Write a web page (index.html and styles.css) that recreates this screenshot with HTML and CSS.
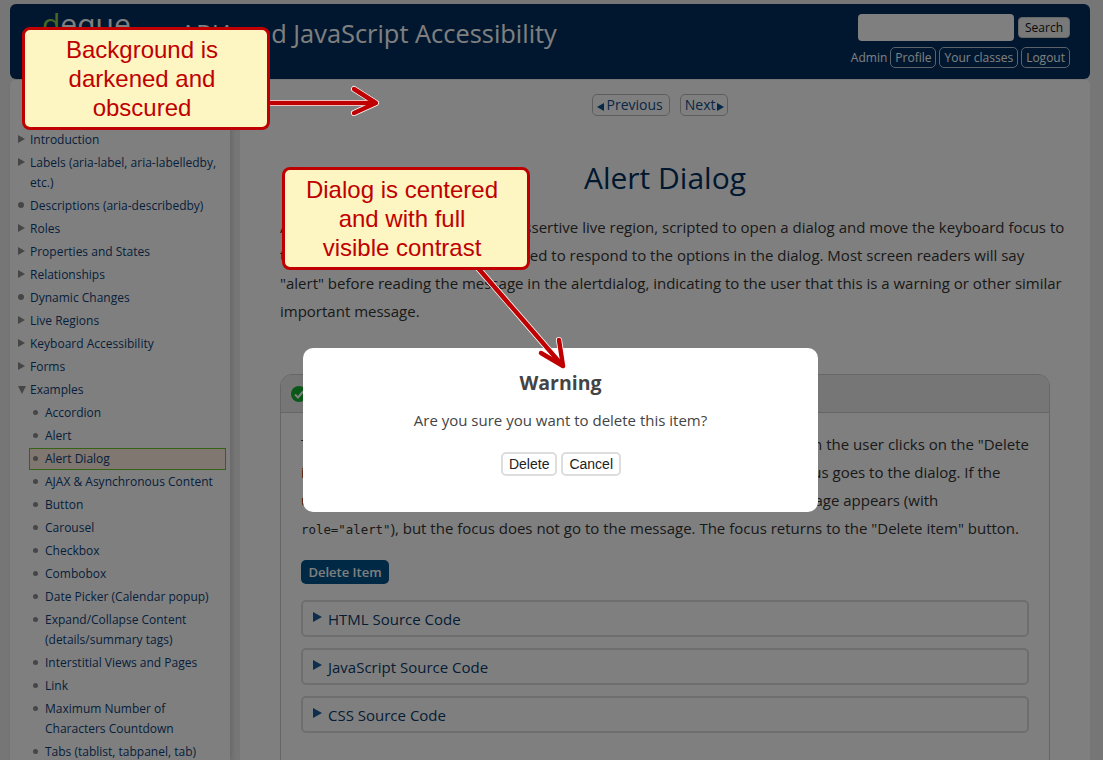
FILE: index.html
```html
<!DOCTYPE html>
<html lang="en">
<head>
    <meta charset="UTF-8">
    <title>Alert Dialog</title>
    <link rel="stylesheet" href="styles.css">
</head>

<body>
    <header class="site-header">
        <div class="brand">
            <span class="logo"><span class="logo-d">d</span>eque</span>
            <span class="site-title">ARIA and JavaScript Accessibility</span>
        </div>
        <div class="header-tools">
            <form class="search">
                <input type="text" class="search-input" aria-label="Search">
                <button type="button" class="search-button">Search</button>
            </form>
            <div class="user-links">
                <span>Admin</span>
                <a href="#">Profile</a>
                <a href="#">Your classes</a>
                <a href="#">Logout</a>
            </div>
        </div>
    </header>

    <div class="layout">
        <nav class="sidebar">
            <ul class="tree">
                <li class="closed"><a href="#">Introduction</a></li>
                <li class="closed"><a href="#">Labels (aria-label, aria-labelledby, etc.)</a></li>
                <li class="leaf"><a href="#">Descriptions (aria-describedby)</a></li>
                <li class="closed"><a href="#">Roles</a></li>
                <li class="closed"><a href="#">Properties and States</a></li>
                <li class="closed"><a href="#">Relationships</a></li>
                <li class="leaf"><a href="#">Dynamic Changes</a></li>
                <li class="closed"><a href="#">Live Regions</a></li>
                <li class="closed"><a href="#">Keyboard Accessibility</a></li>
                <li class="closed"><a href="#">Forms</a></li>
                <li class="open"><a href="#">Examples</a>
                    <ul class="subtree">
                        <li><a href="#">Accordion</a></li>
                        <li><a href="#">Alert</a></li>
                        <li class="active"><a href="#">Alert Dialog</a></li>
                        <li><a href="#">AJAX &amp; Asynchronous Content</a></li>
                        <li><a href="#">Button</a></li>
                        <li><a href="#">Carousel</a></li>
                        <li><a href="#">Checkbox</a></li>
                        <li><a href="#">Combobox</a></li>
                        <li><a href="#">Date Picker (Calendar popup)</a></li>
                        <li><a href="#">Expand/Collapse Content (details/summary tags)</a></li>
                        <li><a href="#">Interstitial Views and Pages</a></li>
                        <li><a href="#">Link</a></li>
                        <li><a href="#">Maximum Number of Characters Countdown</a></li>
                        <li><a href="#">Tabs (tablist, tabpanel, tab)</a></li>
                    </ul>
                </li>
            </ul>
        </nav>

        <main class="content">
            <div class="pager">
                <a href="#"><span class="pager-arrow prev"></span>Previous</a>
                <a href="#">Next<span class="pager-arrow next"></span></a>
            </div>

            <h1>Alert Dialog</h1>
            <p class="intro">An alert dialog is a type of modal, assertive live region, scripted to open a dialog and move the keyboard focus to<br>the dialog. The user is always required to respond to the options in the dialog. Most screen readers will say<br>"alert" before reading the message in the alertdialog, indicating to the user that this is a warning or other similar<br>important message.</p>

            <section class="example">
                <div class="example-head">
                    <svg class="check" width="16" height="16" viewBox="0 0 16 16"><circle cx="8" cy="8" r="8" fill="#14b030"/><path d="M4 8.5l3 3 5-6" fill="none" stroke="#fff" stroke-width="2"/></svg>
                    <span>Good Example</span>
                </div>
                <div class="example-body">
                    <p>This is an example of a modal alert dialog box. The dialog will appear when the user clicks on the "Delete<br><span class="hot">item</span>" button, and the dialog is announced to the screen reader as the focus goes to the dialog. If the<br><span class="hot">user</span> chooses to delete the item, it gets removed and a confirmation message appears (with<br><code>role="alert"</code>), but the focus does not go to the message. The focus returns to the "Delete item" button.</p>
                    <button type="button" class="delete-item">Delete Item</button>
                    <div class="source">HTML Source Code</div>
                    <div class="source">JavaScript Source Code</div>
                    <div class="source">CSS Source Code</div>
                </div>
            </section>
        </main>
    </div>

    <div class="overlay"></div>

    <div class="dialog" role="alertdialog" aria-labelledby="dialogTitle">
        <h2 id="dialogTitle">Warning</h2>
        <p>Are you sure you want to delete this item?</p>
        <div class="dialog-buttons">
            <button type="button">Delete</button>
            <button type="button">Cancel</button>
        </div>
    </div>

    <!-- annotations on top of the screenshot -->
    <svg class="arrows" width="1103" height="760" viewBox="0 0 1103 760">
        <g fill="none" stroke-linecap="round" stroke-linejoin="round">
            <g stroke="#fff" stroke-width="6">
                <path d="M268 103H374"/>
                <path d="M354 89L376 103L354 113"/>
                <path d="M478 268L562 365"/>
                <path d="M541 353L563 366L559 340"/>
            </g>
            <g stroke="#c00000" stroke-width="4.5">
                <path d="M268 103H374"/>
                <path d="M354 89L376 103L354 113"/>
                <path d="M478 268L562 365"/>
                <path d="M541 353L563 366L559 340"/>
            </g>
        </g>
    </svg>
    <div class="callout callout-bg">Background is<br>darkened and<br>obscured</div>
    <div class="callout callout-dialog">Dialog is centered<br>and with full<br>visible contrast</div>
</body>
</html>
```

FILE: styles.css
```css
html, body {
    height: 100%;
    overflow: hidden;
}

body {
    font-family: "Open Sans", sans-serif;
    background-color: #ececec;
    color: #333;
    margin: 0;
    padding: 4px 13px 0 10px;
    box-sizing: border-box;
}

a {
    color: #0d4f8f;
    text-decoration: none;
}

/* header */
.site-header {
    height: 75px;
    box-sizing: border-box;
    background-color: #002e5e;
    border-radius: 6px;
    display: flex;
    justify-content: space-between;
    padding: 10px 20px 0 32px;
    overflow: hidden;
}

.brand {
    display: flex;
    align-items: flex-start;
}

.logo {
    font-family: "Open Sans", sans-serif;
    font-size: 30px;
    line-height: 20px;
    color: #fff;
    width: 138px;
}

.logo-d {
    color: #8fd24f;
}

.site-title {
    font-size: 25.4px;
    line-height: 38px;
    color: #fff;
    white-space: nowrap;
}

.header-tools {
    display: flex;
    flex-direction: column;
    align-items: flex-end;
    gap: 6px;
}

.search {
    display: flex;
    align-items: center;
    gap: 4px;
}

.search-input {
    width: 156px;
    height: 27px;
    box-sizing: border-box;
    border: none;
    border-radius: 4px;
    background-color: #fff;
}

.search-button {
    width: 52px;
    height: 21px;
    padding: 0;
    font-family: inherit;
    font-size: 12px;
    color: #111;
    background-color: #f2f2f2;
    border: 1px solid #ccc;
    border-radius: 4px;
}

.user-links {
    display: flex;
    align-items: center;
    gap: 3px;
    font-size: 12px;
    color: #fff;
}

.user-links a {
    color: #fff;
    height: 21px;
    line-height: 19px;
    box-sizing: border-box;
    padding: 0 4px;
    border: 1px solid #b7c4d2;
    border-radius: 5px;
}

/* page columns */
.layout {
    display: flex;
    margin-top: 1px;
}

.sidebar {
    width: 220px;
    flex: none;
    height: 680px;
    box-sizing: border-box;
    background-color: #fff;
    padding: 50px 5px 0 0;
    box-shadow: 2px 0 4px rgba(0, 0, 0, 0.12);
    border-radius: 5px 0 0 0;
    font-size: 12px;
    line-height: 20px;
}

.tree, .subtree {
    list-style: none;
    margin: 0;
    padding: 0;
}

.tree li {
    margin-bottom: 3px;
}

.tree a {
    display: flex;
    color: #0d3f78;
}

.tree a::before {
    content: "";
    flex: none;
}

.closed > a::before {
    width: 0;
    height: 0;
    margin: 5px 5px 0 8px;
    border-left: 7px solid #8c8c8c;
    border-top: 4.5px solid transparent;
    border-bottom: 4.5px solid transparent;
}

.open > a::before {
    width: 0;
    height: 0;
    margin: 6px 4px 0 8px;
    border-top: 8px solid #8c8c8c;
    border-left: 4.5px solid transparent;
    border-right: 4.5px solid transparent;
}

.leaf > a::before {
    width: 6px;
    height: 6px;
    margin: 6px 6px 0 8px;
    border-radius: 50%;
    background-color: #8c8c8c;
}

.subtree {
    margin: 3px 0 0 20px;
}

.subtree li a::before {
    width: 5px;
    height: 5px;
    margin: 7px 7px 0 3px;
    border-radius: 50%;
    background-color: #8c8c8c;
}

.subtree li.active {
    background-color: #ffeee0;
    outline: 1px solid #6fc22a;
}

.content {
    flex: 1;
    min-width: 0;
    height: 680px;
    margin-left: 10px;
    background-color: #fff;
    padding: 14px 20px 0 40px;
    border-radius: 0 5px 0 0;
}

.pager {
    display: flex;
    justify-content: center;
    gap: 10px;
    padding-right: 30px;
    font-size: 14px;
}

.pager a {
    height: 22px;
    line-height: 20px;
    box-sizing: border-box;
    padding: 0 6px 0 4px;
    border: 1px solid #bbb;
    border-radius: 5px;
}

.pager a:last-child {
    padding: 0 3px 0 4px;
}

.pager-arrow {
    display: inline-block;
    width: 0;
    height: 0;
    vertical-align: -1px;
    border-top: 4px solid transparent;
    border-bottom: 4px solid transparent;
}

.pager-arrow.prev {
    margin-right: 3px;
    border-right: 7px solid #0d4f8f;
}

.pager-arrow.next {
    margin-left: 2px;
    border-left: 7px solid #0d4f8f;
}

h1 {
    font-size: 30px;
    font-weight: 400;
    line-height: 40px;
    color: #00305f;
    text-align: center;
    margin: 42px 0 0;
    padding-right: 20px;
}

.intro {
    font-size: 15px;
    line-height: 28px;
    margin: 15px 0 0;
    white-space: nowrap;
}

/* example panel */
.example {
    margin: 49px 20px 0 0;
    height: 420px;
    border: 1px solid #ccc;
    border-radius: 12px 12px 0 0;
}

.example-head {
    height: 38px;
    box-sizing: border-box;
    background-color: #ececec;
    border-bottom: 1px solid #ccc;
    border-radius: 11px 11px 0 0;
    display: flex;
    align-items: center;
    gap: 8px;
    padding: 0 10px;
    font-size: 15px;
}

.example-body {
    padding: 17px 20px 0;
}

.example-body p {
    font-size: 15px;
    line-height: 28px;
    margin: 0;
    white-space: nowrap;
}

.hot {
    color: #802010;
}

code {
    font-family: "DejaVu Sans Mono", monospace;
    font-size: 12.4px;
}

.delete-item {
    display: block;
    margin: 16px 0;
    width: 88px;
    height: 24px;
    padding: 0;
    font-family: inherit;
    font-size: 13px;
    font-weight: 600;
    color: #fff;
    background-color: #00528c;
    border: none;
    border-radius: 5px;
}

.source {
    height: 37px;
    box-sizing: border-box;
    margin-bottom: 11px;
    border: 2px solid #ddd;
    border-radius: 5px;
    padding-left: 25px;
    display: flex;
    align-items: center;
    font-size: 15px;
    color: #0b3b6b;
}

.source::before {
    content: "";
    width: 0;
    height: 0;
    margin: 0 6px 3px -15px;
    border-left: 9px solid #1d5c9c;
    border-top: 5px solid transparent;
    border-bottom: 5px solid transparent;
}

/* modal */
.overlay {
    position: fixed;
    top: 0;
    left: 0;
    right: 0;
    bottom: 0;
    background-color: rgba(0, 0, 0, 0.5);
}

.dialog {
    position: fixed;
    left: 303px;
    top: 348px;
    width: 515px;
    height: 164px;
    box-sizing: border-box;
    background-color: #fff;
    border-radius: 10px;
    text-align: center;
    padding-top: 21px;
}

.dialog h2 {
    font-size: 19.5px;
    line-height: 28px;
    color: #444;
    margin: 0;
}

.dialog p {
    font-size: 15px;
    line-height: 20px;
    color: #444;
    margin: 13px 0 0;
}

.dialog-buttons {
    display: flex;
    justify-content: center;
    gap: 4px;
    margin-top: 22px;
    padding-left: 1px;
}

.dialog-buttons button {
    height: 24px;
    padding: 0 6px;
    font-family: "Liberation Sans", sans-serif;
    font-size: 14px;
    color: #222;
    background-color: #fff;
    border: 2px solid #ddd;
    border-radius: 5px;
}

/* annotations */
.arrows {
    position: fixed;
    top: 0;
    left: 0;
}

.callout {
    position: fixed;
    width: 248px;
    height: 103px;
    box-sizing: border-box;
    padding: 5px 8px 0 0;
    background-color: #fdf5c2;
    border: 3px solid #c00000;
    border-radius: 8px;
    font-family: "Liberation Sans", sans-serif;
    font-size: 24px;
    line-height: 29px;
    color: #c00000;
    text-align: center;
}

.callout-bg {
    left: 22px;
    top: 27px;
}

.callout-dialog {
    left: 282px;
    top: 167px;
}
```
